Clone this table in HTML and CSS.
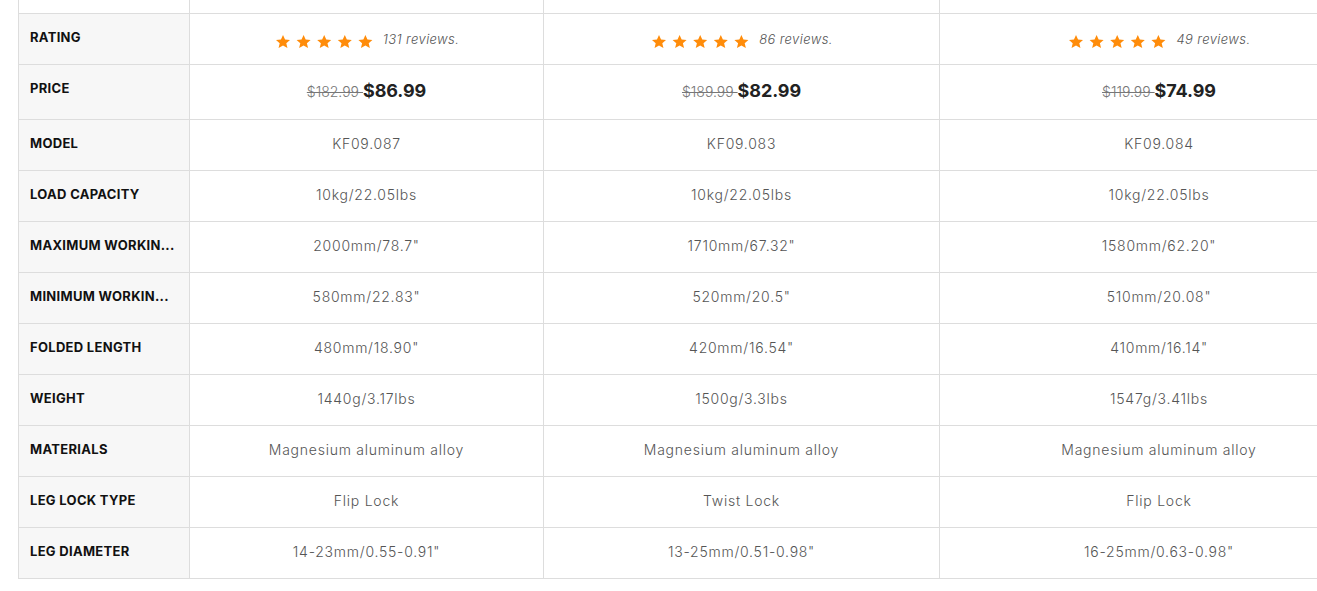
FILE: index.html
```html
<!DOCTYPE html>
<html>
<head>
<meta charset="utf-8">
<link rel="stylesheet" href="styles.css">
</head>
<body>
<div class="wrap">
<table class="compare">
  <colgroup>
    <col class="c-label"><col class="c-a"><col class="c-b"><col class="c-c">
  </colgroup>
  <tr class="top-row"><td></td><td></td><td></td><td></td></tr>
  <tr class="row-rating">
    <th>RATING</th>
    <td><span class="stars"><svg viewBox="0 0 104 14" width="104" height="14"><g fill="#ff8c0a"><path id="s" d="M7 0l2.05 4.55 4.95.45-3.7 3.2 1.15 4.850L7 10.5 2.55 13.05 3.7 8.2 0 5l4.95-.45z"/><use href="#s" x="20.6"/><use href="#s" x="41.2"/><use href="#s" x="61.8"/><use href="#s" x="82.4"/></g></svg></span><span class="reviews">131 reviews.</span></td>
    <td><span class="stars"><svg viewBox="0 0 104 14" width="104" height="14"><g fill="#ff8c0a"><path id="s2" d="M7 0l2.05 4.55 4.95.45-3.7 3.2 1.15 4.85L7 10.5 2.55 13.05 3.7 8.2 0 5l4.95-.45z"/><use href="#s2" x="20.6"/><use href="#s2" x="41.2"/><use href="#s2" x="61.8"/><use href="#s2" x="82.4"/></g></svg></span><span class="reviews">86 reviews.</span></td>
    <td><span class="stars"><svg viewBox="0 0 104 14" width="104" height="14"><g fill="#ff8c0a"><path id="s3" d="M7 0l2.05 4.55 4.95.45-3.7 3.2 1.15 4.85L7 10.5 2.55 13.05 3.7 8.2 0 5l4.95-.45z"/><use href="#s3" x="20.6"/><use href="#s3" x="41.2"/><use href="#s3" x="61.8"/><use href="#s3" x="82.4"/></g></svg></span><span class="reviews">49 reviews.</span></td>
  </tr>
  <tr class="row-price">
    <th>PRICE</th>
    <td><del>$182.99 </del><span class="now">$86.99</span></td>
    <td><del>$189.99 </del><span class="now">$82.99</span></td>
    <td><del>$119.99 </del><span class="now">$74.99</span></td>
  </tr>
  <tr><th>MODEL</th><td>KF09.087</td><td>KF09.083</td><td>KF09.084</td></tr>
  <tr><th>LOAD CAPACITY</th><td>10kg/22.05lbs</td><td>10kg/22.05lbs</td><td>10kg/22.05lbs</td></tr>
  <tr><th>MAXIMUM WORKIN...</th><td>2000mm/78.7"</td><td>1710mm/67.32"</td><td>1580mm/62.20"</td></tr>
  <tr><th>MINIMUM WORKIN...</th><td>580mm/22.83"</td><td>520mm/20.5"</td><td>510mm/20.08"</td></tr>
  <tr><th>FOLDED LENGTH</th><td>480mm/18.90"</td><td>420mm/16.54"</td><td>410mm/16.14"</td></tr>
  <tr><th>WEIGHT</th><td>1440g/3.17lbs</td><td>1500g/3.3lbs</td><td>1547g/3.41lbs</td></tr>
  <tr><th>MATERIALS</th><td>Magnesium aluminum alloy</td><td>Magnesium aluminum alloy</td><td>Magnesium aluminum alloy</td></tr>
  <tr><th>LEG LOCK TYPE</th><td>Flip Lock</td><td>Twist Lock</td><td>Flip Lock</td></tr>
  <tr><th>LEG DIAMETER</th><td>14-23mm/0.55-0.91"</td><td>13-25mm/0.51-0.98"</td><td>16-25mm/0.63-0.98"</td></tr>
</table>
</div>
</body>
</html>
```
FILE: styles.css
```css
html, body {
  margin: 0;
  padding: 0;
  background: #fff;
}
.wrap {
  width: 1317px;
  height: 591px;
  overflow: hidden;
  padding-left: 18px;
  box-sizing: border-box;
}
.compare {
  border-collapse: collapse;
  table-layout: fixed;
  width: 1360px;
  font-family: "Inter", "DejaVu Sans", sans-serif;
}
.c-label { width: 171px; }
.c-a { width: 354px; }
.c-b { width: 396px; }
.c-c { width: 439px; }
.compare th,
.compare td {
  border: 1px solid #dddddd;
  height: 51px;
  padding: 0;
  vertical-align: top;
  box-sizing: border-box;
}
.compare th {
  background: #f7f7f7;
  text-align: left;
  padding: 15px 4px 0 11px;
  font-size: 13px;
  font-weight: 700;
  color: #111;
  letter-spacing: 0.3px;
  white-space: nowrap;
  overflow: hidden;
}
.compare td {
  text-align: center;
  padding-top: 15px;
  font-size: 14px;
  font-weight: 300;
  color: #555;
  line-height: 18px;
  letter-spacing: 0.75px;
}
.compare .top-row td {
  height: 13px;
  padding: 0;
  border-top: none;
  background: #fff;
}
.row-rating td {
  padding-top: 16px;
}
.stars {
  display: inline-block;
  vertical-align: top;
  margin-top: 5px;
  margin-left: 2px;
  line-height: 0;
}
.reviews {
  font-style: italic;
  font-size: 13px;
  color: #555;
  margin-left: 3px;
  letter-spacing: 0.4px;
}
.row-price th,
.row-price td {
  height: 55px;
}
.row-price td {
  padding-top: 17px;
  letter-spacing: 0;
}
.row-price del {
  font-size: 14px;
  color: #777;
  text-decoration: line-through;
}
.now {
  font-size: 18px;
  font-weight: 700;
  color: #222;
  letter-spacing: -0.1px;
}
```
